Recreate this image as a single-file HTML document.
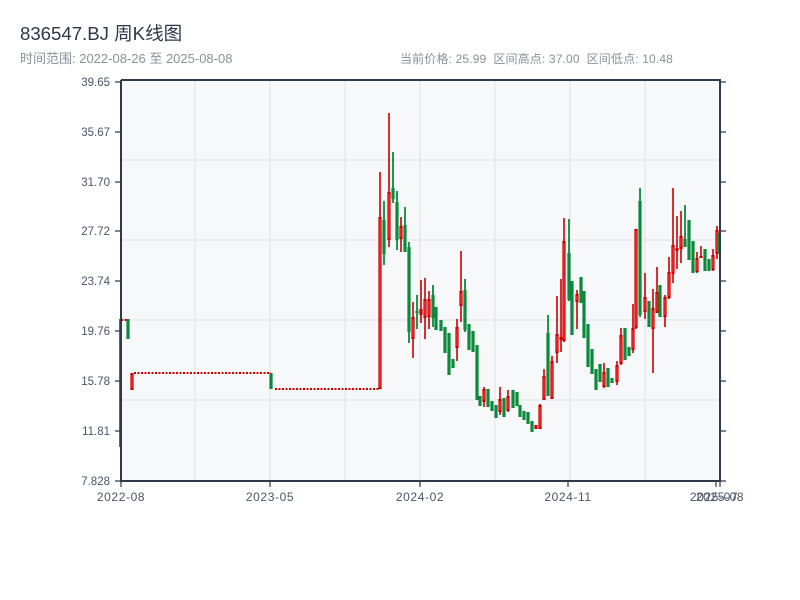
<!DOCTYPE html>
<html><head><meta charset="utf-8"><style>
html,body{margin:0;padding:0;background:#fff;width:800px;height:600px;overflow:hidden}
svg{display:block}
text{font-family:"Liberation Sans","Noto Sans CJK SC",sans-serif}
</style></head><body>
<svg width="800" height="600" viewBox="0 0 800 600" xmlns="http://www.w3.org/2000/svg">
<text x="20" y="40" font-size="18.6" fill="#2d3748">836547.BJ 周K线图</text>
<text x="20" y="63" font-size="13" fill="#8a9099">时间范围: 2022-08-26 至 2025-08-08</text>
<text x="400" y="63" font-size="12" fill="#8a9099" letter-spacing="0.15">当前价格: 25.99 &#160;区间高点: 37.00 &#160;区间低点: 10.48</text>
<rect x="121" y="81" width="599" height="400" fill="#f6f8fa"/>
<path d="M195 81V481M270 81V481M345 81V481M420 81V481M495 81V481M570 81V481M645 81V481M121 160H720M121 240H720M121 320H720M121 400H720" stroke="#e2e5ea" stroke-width="1.2"/>
<g stroke="#c00" stroke-width="2" stroke-dasharray="2,1.5">
<path d="M121 320H127M134 373H271M275 389H379"/>
</g>
<path stroke="#c00" stroke-width="1.6" d="M120 319V447M132 373V390M380 172V389M389 113V247M401 217V252M413 302V358M421 280V323M425 278V339M429 291V329M457 319V361M461 251V322M484 387V407M500 387V415M508 390V412M536 425V429M540 404V429M544 369V400M552 356V399M557 296V363M561 279V352M564 218V342M577 290V329M604 363V388M617 361V385M621 328V365M633 304V353M636 229V329M645 273V319M653 289V373M657 267V313M665 295V327M669 257V299M673 188V283M677 216V269M681 211V263M697 252V273M701 246V258M713 249V271M717 226V259"/>
<path stroke="#c00" stroke-width="3.2" d="M132 373V390M380 217V389M389 192V240M401 226V239M413 317V339M421 309V315M425 299V318M429 299V317M457 327V348M461 291V306M484 389V402M500 399V412M508 396V411M536 425V429M540 405V429M544 376V400M552 361V399M557 334V353M561 337V340M564 241V341M577 294V302M604 372V387M617 365V382M621 335V364M633 328V350M636 229V328M645 297V312M653 308V329M657 292V313M665 297V317M669 272V298M673 245V274M677 248V251M681 236V249M697 258V272M701 256V258M713 255V270M717 230V254"/>
<path stroke="#f33" stroke-width="1.2" d="M132 375V388M380 219V387M389 194V238M401 228V237M413 319V337M425 301V316M429 301V315M457 329V346M461 293V304M484 391V400M500 401V410M508 398V409M540 407V427M544 378V398M552 363V397M557 336V351M564 243V339M577 296V300M604 374V385M617 367V380M621 337V362M633 330V348M636 231V326M645 299V310M653 310V327M657 294V311M665 299V315M669 274V296M673 247V272M681 238V247M697 260V270M713 257V268M717 232V252"/>
<path stroke="#0a8a3a" stroke-width="1.8" d="M384 201V265M393 152V203M397 191V250M405 207V252M409 242V343M417 295V329M433 285V327M465 279V332M548 315V396M569 219V301M640 188V317M685 205V247"/>
<path stroke="#0a8a3a" stroke-width="3.2" d="M128 319V339M271 373V389M384 220V254M393 188V199M397 202V240M405 225V252M409 247V332M417 311V313M433 295V318M436 307V330M441 320V331M445 327V353M449 333V375M453 359V368M465 290V330M469 324V350M473 331V352M477 345V400M480 396V406M488 389V407M492 401V411M496 405V418M504 398V417M513 390V408M517 392V406M520 405V417M524 411V420M528 412V424M532 421V432M548 333V396M569 253V300M572 281V335M581 277V303M584 291V338M588 324V367M592 349V374M596 369V390M600 364V382M608 368V387M612 378V383M625 328V360M629 347V356M640 201V315M649 301V327M660 285V317M685 239V247M689 220V260M693 241V273M705 249V271M709 259V271M719 233V253"/>
<path d="M121 80H721M121 80V482M120 481H721M720 80V482" stroke="#2d3a4a" stroke-width="2" fill="none"/>
<path d="M115 82H121M115 132H121M115 182H121M115 231H121M115 281H121M115 331H121M115 381H121M115 431H121M115 481H121M720 82H726M720 132H726M720 182H726M720 231H726M720 281H726M720 331H726M720 381H726M720 431H726M720 481H726M121 481V487M270 481V487M420 481V487M568 481V487M716 481V487M720 481V487" stroke="#2d3a4a" stroke-width="1.2"/>
<g font-size="11.5" fill="#4a5568" text-anchor="end">
<text x="110" y="86">39.65</text><text x="110" y="136">35.67</text><text x="110" y="186">31.70</text><text x="110" y="235">27.72</text><text x="110" y="285">23.74</text><text x="110" y="335">19.76</text><text x="110" y="385">15.78</text><text x="110" y="435">11.81</text><text x="110" y="485">7.828</text>
</g>
<g font-size="12" fill="#4a5568" text-anchor="middle" letter-spacing="0.6">
<text x="121" y="501">2022-08</text><text x="270" y="501">2023-05</text><text x="420" y="501">2024-02</text><text x="568" y="501">2024-11</text><text x="714" y="501">2025-07</text><text x="720" y="501">2025-08</text>
</g>
</svg>
</body></html>
